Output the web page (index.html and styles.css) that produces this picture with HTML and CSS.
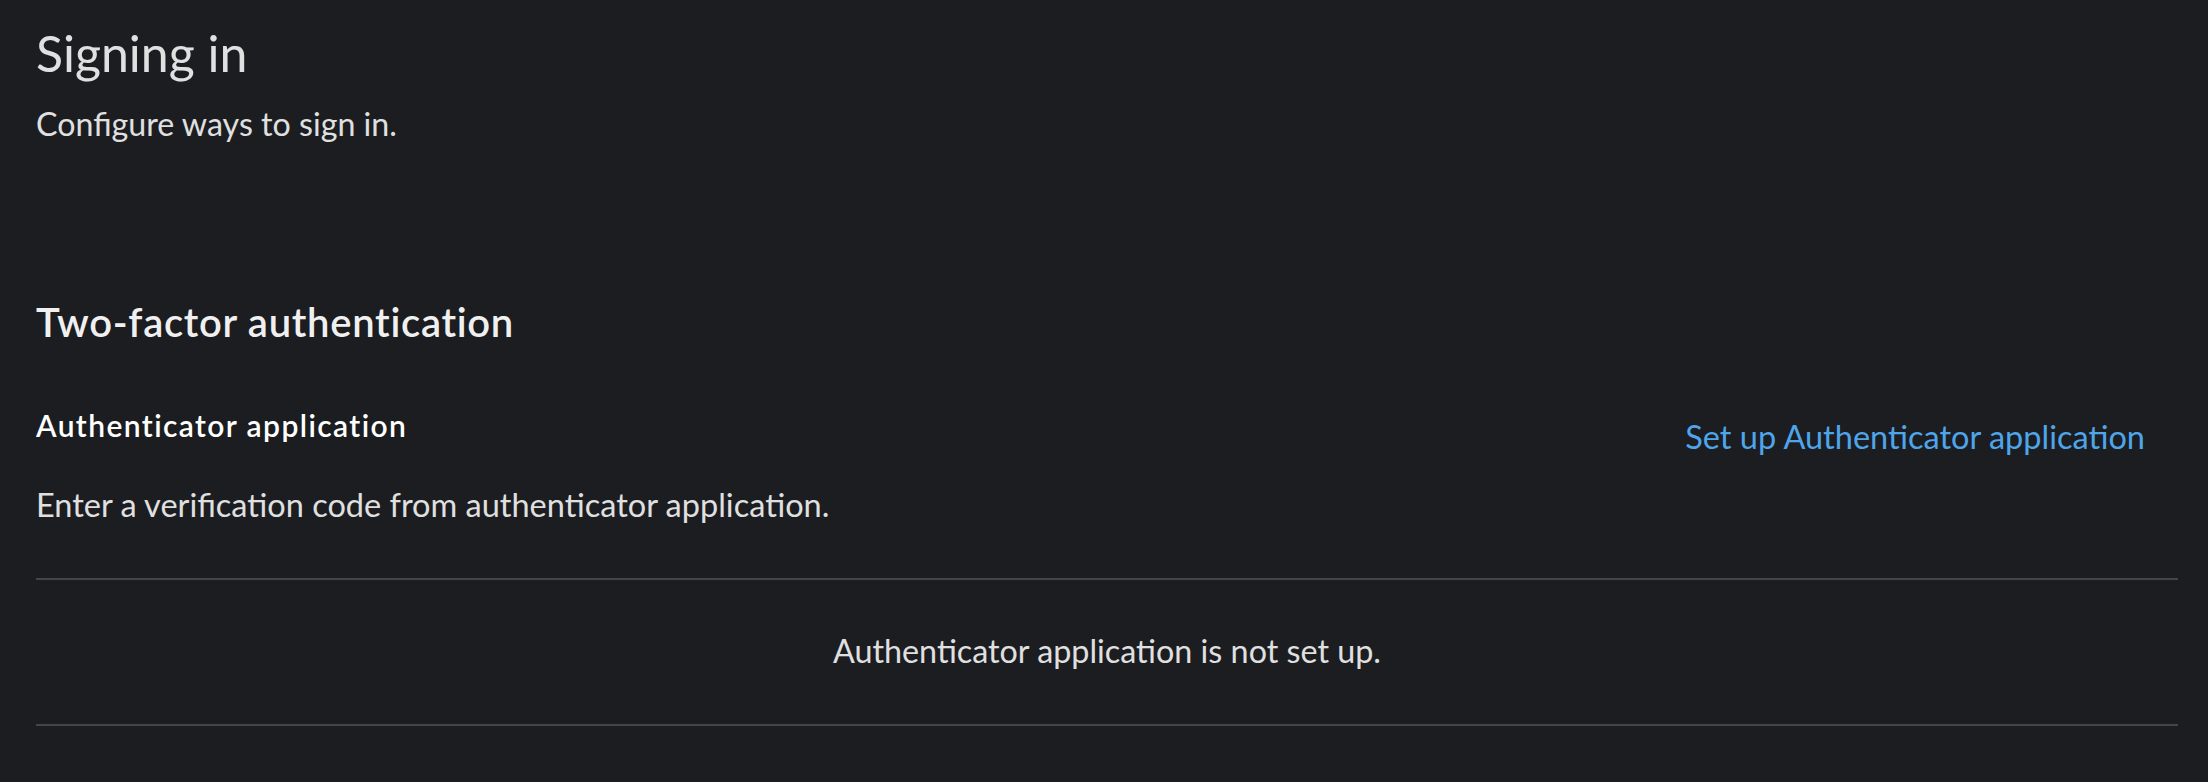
FILE: index.html
```html
<!DOCTYPE html>
<html lang="en">
<head>
<meta charset="utf-8">
<title>Signing in</title>
<link rel="stylesheet" href="styles.css">
</head>
<body>
<main class="page">
  <header class="page-header">
    <h1 class="page-title">Signing in</h1>
    <p class="page-desc">Configure ways to sign in.</p>
  </header>
  <section class="category">
    <h2 class="category-title">Two-factor authentication</h2>
    <div class="cred-head">
      <div class="cred-info">
        <h3 class="cred-title">Authenticator application</h3>
        <p class="cred-desc">Enter a verification code from authenticator application.</p>
      </div>
      <a class="cred-action" href="#">Set up Authenticator application</a>
    </div>
    <div class="cred-list">
      <div class="cred-empty">Authenticator application is not set up.</div>
    </div>
  </section>
</main>
</body>
</html>
```

FILE: styles.css
```css
* { box-sizing: border-box; }
html, body { margin: 0; padding: 0; }
body {
  background: #1b1d21;
  color: #e0e0e0;
  font-family: Lato, "Open Sans", sans-serif;
  font-size: 32.5px;
  width: 2208px;
  height: 782px;
  overflow: hidden;
}
.page { padding: 0 30px 0 36px; }
.page-header { padding-top: 21px; }
.page-title {
  margin: 0;
  font-size: 50px;
  font-weight: 400;
  line-height: 64px;
  color: #e0e0e0;
}
.page-desc {
  margin: 15px 0 0;
  font-size: 32.2px;
  line-height: 48px;
}
.category { padding-top: 148px; }
.category-title {
  margin: 0;
  font-size: 40px;
  font-weight: 600;
  letter-spacing: 0.7px;
  line-height: 52px;
  color: #f0f0f0;
}
.cred-head {
  display: flex;
  justify-content: space-between;
  align-items: flex-start;
  margin-top: 57px;
}
.cred-title {
  margin: 0;
  font-size: 30px;
  font-weight: 600;
  letter-spacing: 1.4px;
  line-height: 40px;
  color: #fff;
}
.cred-desc {
  margin: 36px 0 0;
  font-size: 32.5px;
  line-height: 48px;
}
.cred-action {
  color: #4fa5ea;
  text-decoration: none;
  font-size: 32.5px;
  line-height: 48px;
  padding: 8px 33px 0 0;
}
.cred-list {
  margin-top: 49px;
  border-top: 2px solid #444548;
  border-bottom: 2px solid #444548;
}
.cred-empty {
  text-align: center;
  font-size: 32.3px;
  line-height: 48px;
  padding: 47px 0 49px;
}
```
